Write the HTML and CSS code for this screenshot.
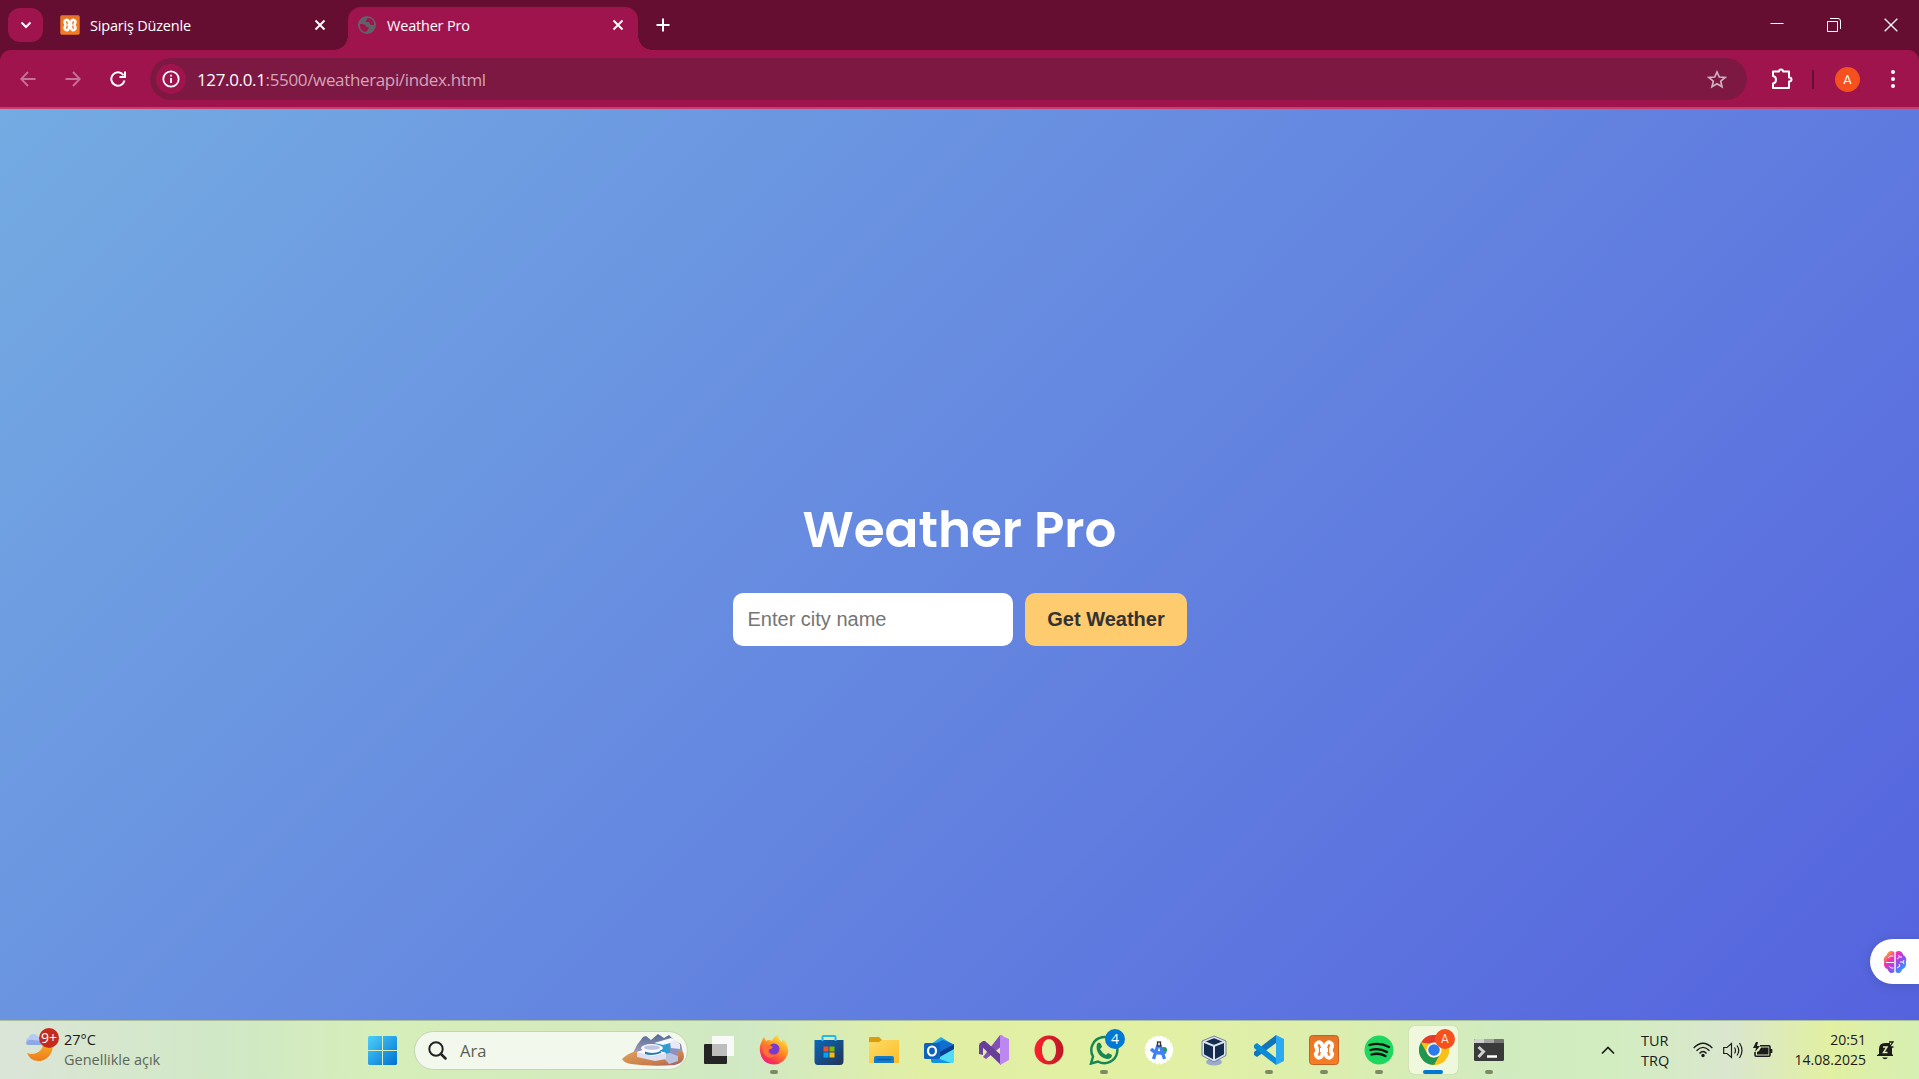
FILE: index.html
```html
<!DOCTYPE html>
<html lang="tr">
<head>
<meta charset="utf-8">
<title>Weather Pro</title>
<link rel="stylesheet" href="styles.css">
</head>
<body>
<svg class="defs" width="0" height="0" aria-hidden="true">
  <defs>
    <linearGradient id="orange" x1="0" y1="0" x2="0" y2="1"><stop offset="0" stop-color="#d9742f"/><stop offset=".2" stop-color="#ee7622"/><stop offset="1" stop-color="#f47d25"/></linearGradient>
    <symbol id="xampp" viewBox="0 0 30 30"><rect x=".5" y=".5" width="29" height="29" rx="3" fill="url(#orange)" stroke="#c66225"/><path d="M13.200 10.500A3.200 3.200 0 1 0 8 13V17A3.200 3.200 0 1 0 13.200 19.500C13.200 17.500 16.800 17.500 16.800 19.500A3.200 3.200 0 1 0 22 17V13A3.200 3.200 0 1 0 16.800 10.500C16.800 12.500 13.200 12.500 13.200 10.500Z" fill="none" stroke="#fff" stroke-width="3.800" stroke-linejoin="round"/><path d="M11 15H19" stroke="#fff" stroke-width="4"/></symbol>
    <symbol id="x" viewBox="0 0 12 12"><path d="M1.500 1.500 10.500 10.500M10.500 1.500 1.500 10.500" stroke="currentColor" fill="none"/></symbol>
  </defs>
</svg>
<div class="screen">
  <header class="tabstrip">
    <div class="tab-search"><svg width="12" height="8" viewBox="0 0 12 8"><path d="M1.500 1.500 6 6 10.500 1.500" fill="none" stroke="#fff" stroke-width="2"/></svg></div>
    <div class="tab"><svg class="favicon" width="20" height="20"><use href="#xampp"/></svg><span class="title t1">Sipariş Düzenle</span><svg class="close" width="12" height="12"><use href="#x"/></svg></div>
    <div class="tab active"><svg class="favicon" width="18" height="18" viewBox="0 0 18 18"><circle cx="9" cy="9" r="9" fill="#5f6368"/><path d="M2 8C5 8 8 8.500 8.500 11H10.500V13L8 16C4 15.500 1.500 13 2 8ZM10 2 8 4V6H10C12 6 11.500 8.500 13 9H16C16.500 5 13.500 2 10 2Z" fill="#a0144e"/></svg><span class="title t2">Weather Pro</span><svg class="close" width="12" height="12"><use href="#x"/></svg></div>
    <svg class="plus" width="14" height="14" viewBox="0 0 14 14"><path d="M7 .5V13.500M.5 7H13.500" stroke="#fff" stroke-width="2"/></svg>
    <div class="window-controls">
      <svg width="14" height="14" viewBox="0 0 14 14"><path d="M.5 5.500H13.500" stroke="#fff"/></svg>
      <svg width="14" height="14" viewBox="0 0 14 14"><path d="M.5 3.500H10.500V13.500H.5ZM3 .5H11Q13.500.5 13.500 3V11" fill="none" stroke="#fff"/></svg>
      <svg width="14" height="14" viewBox="0 0 14 14"><path d="M.7.7 13.300 13.300M13.300.7.7 13.300" stroke="#fff" stroke-width="1.300"/></svg>
    </div>
  </header>
  <nav class="toolbar">
    <svg class="nav-icon dim" width="16" height="16" viewBox="0 0 16 16"><path d="M15.500 8H1.500M8 1 1.200 8 8 15" fill="none" stroke="currentColor" stroke-width="1.800"/></svg>
    <svg class="nav-icon dim" width="16" height="16" viewBox="0 0 16 16"><path d="M.5 8H14.500M8 1 14.800 8 8 15" fill="none" stroke="currentColor" stroke-width="1.800"/></svg>
    <svg class="nav-icon" width="16" height="16" viewBox="0 0 16 16"><path d="M14.500 9.500A6.700 6.700 0 1 1 13.500 4.200M15 .5V6H9.500" fill="none" stroke="currentColor" stroke-width="2"/></svg>
    <div class="omnibox">
      <span class="info"><svg width="18" height="18" viewBox="0 0 18 18"><circle cx="9" cy="9" r="7.700" fill="none" stroke="#fff" stroke-width="1.800"/><path d="M9 8V13M9 4.800V6.600" stroke="#fff" stroke-width="1.800"/></svg></span>
      <span class="url"><b>127.0.0.1</b>:5500/weatherapi/index.html</span>
      <svg class="star" width="20" height="19" viewBox="0 0 20 19"><path d="M10 2 12.300 7 18 7.500 13.700 11.200 15 16.800 10 13.800 5 16.800 6.300 11.200 2 7.500 7.700 7Z" fill="none" stroke="#cfb2c0" stroke-width="1.700"/></svg>
    </div>
    <svg class="puzzle" width="22" height="22" viewBox="0 0 22 22"><path d="M2 3.500H8Q8 1.500 10 1.500T12 3.500H18V9.500Q20.500 9.500 20.500 11.500T18 13.500V20H2V15.500Q5 15 5 11.750T2 8Z" fill="none" stroke="#fff" stroke-width="2" stroke-linejoin="round"/></svg>
    <i class="divider"></i>
    <span class="avatar">A</span>
    <svg class="dots" width="4" height="18" viewBox="0 0 4 18" fill="#fff"><circle cx="2" cy="2" r="2"/><circle cx="2" cy="9" r="2"/><circle cx="2" cy="16" r="2"/></svg>
  </nav>
  <main class="page">
    <h1>Weather Pro</h1>
    <div class="search-box"><input type="text" placeholder="Enter city name"><button>Get Weather</button></div>
    <div class="assistant"><svg width="24" height="24" viewBox="0 0 24 24"><defs><linearGradient id="brain" x1="0" y1="0" x2="1" y2="1"><stop offset=".1" stop-color="#ffab22"/><stop offset=".35" stop-color="#f32abd"/><stop offset=".6" stop-color="#8754ed"/><stop offset=".9" stop-color="#1aa9ff"/></linearGradient></defs><path d="M11.300 2C8-.5 4 2 3.800 5 .5 7 0 10 1.300 12 0 15 2 18.500 4.500 19 6 23.500 9.500 24 11.300 22ZM12.700 2C16-.5 20 2 20.200 5 23.500 7 24 10 22.700 12 24 15 22 18.500 19.500 19 18 23.500 14.500 24 12.700 22Z" fill="url(#brain)"/><path d="M3 12.500H11M10.500 6H7L5 8M10.500 18H8L6 16M14 9 16.500 7 15.500 5M16.500 7H19M14 18 17 16M17 16 16 14M17 12H20L21 10M20 12 21 14" stroke="#fff" fill="none"/></svg></div>
  </main>
  <footer class="taskbar">
    <div class="weather">
      <svg width="36" height="36" viewBox="0 0 36 36"><defs><linearGradient id="moon" x1="0" y1="0" x2="0" y2="1"><stop offset="0" stop-color="#f5b12c"/><stop offset="1" stop-color="#ef7b18"/></linearGradient></defs><path d="M28 15C31 24 24 34 15 34 9 34 5 31 3 26 10 29 18 25 19 18Z" fill="url(#moon)"/><path d="M4.500 18A4 4 0 0 1 4.500 10.500Q6 6.500 10 7 14 8 16 12L17 18Z" fill="#b4c9f3"/><path d="M2 16Q4 12 9 13L17 14V18H4.500Q2 18 2 16Z" fill="#8da9e5"/><circle cx="25" cy="11" r="10" fill="#c42b1c"/><text x="25" y="16" class="badge-nine">9+</text></svg>
      <div class="weather-text"><span>27°C</span><span>Genellikle açık</span></div>
    </div>
    <div class="apps">
      <svg class="start" width="29" height="29" viewBox="0 0 29 29"><defs><linearGradient id="win" gradientUnits="userSpaceOnUse" x1="0" y1="0" x2="29" y2="29"><stop stop-color="#4dd0fb"/><stop offset="1" stop-color="#0070d2"/></linearGradient></defs><path d="M1 0H14V14H0V1ZM15 0H28L29 1V14H15ZM0 15H14V29H1L0 28ZM15 15H29V28L28 29H15Z" fill="url(#win)"/></svg>
      <div class="search"><svg width="19" height="19" viewBox="0 0 19 19"><circle cx="8" cy="8" r="6.700" fill="none" stroke="#222" stroke-width="2"/><path d="M13 13 17.500 17.500" stroke="#222" stroke-width="2.500" stroke-linecap="round"/></svg><span>Ara</span>
        <svg class="art" width="64" height="34" viewBox="0 0 64 34"><defs><linearGradient id="sand" x1="0" y1="0" x2="1" y2="1"><stop stop-color="#e2a35d"/><stop offset=".7" stop-color="#c77c4a"/><stop offset="1" stop-color="#935b70"/></linearGradient><linearGradient id="hill" x1="0" y1="0" x2="0" y2="1"><stop stop-color="#536996"/><stop offset="1" stop-color="#b9afc5"/></linearGradient></defs><path d="M12 20 16 12 22 4 25 3 30 7 37 1 43 5 48 2 54 8 60 11 62 20 58 25H11Z" fill="url(#hill)"/><path d="M1 26Q7 20 16 18L30 20 54 17 62 19Q66 29 54 32 30 34 10 31 3 30 1 26Z" fill="url(#sand)"/><path d="M31 11 48 7 50 9V21L42 23 31 17Z" fill="#1b82bd"/><path d="M41 11 49 9V21L42 23Z" fill="#2a9fd2"/><path d="M33 10 50 5 56 8 42 12Z" fill="#f8f8ff"/><path d="M49 9 57 12V28L48 31V24L40 22 49 20Z" fill="#8c91bf"/><path d="M49 9 54 7 59 11V16L50 15Z" fill="#e8eaf8"/><path d="M40 22 49 20 57 23V28L48 31Z" fill="#bcc3df"/><path d="M16 19 29 15 45 20V26L34 28 16 24Z" fill="#dde0f3"/><path d="M16 19 29 15 45 20 32 23Z" fill="#fbfaff"/><ellipse cx="31" cy="15" rx="11" ry="4" fill="#fafaff"/><ellipse cx="31" cy="14.500" rx="8" ry="2.300" fill="#bec5e0"/><path d="M24 18.500Q31 21.500 40 18V20Q31 23.500 24 21Z" fill="#257eab"/></svg>
      </div>
      <div class="app"><svg width="32" height="30" viewBox="0 0 32 30"><rect x="1" y="9" width="23" height="20" rx="1" fill="#252525"/><rect x="9" y="1" width="22" height="20" rx="1" fill="#fafafa" fill-opacity=".96"/><path d="M9 9H24V21H9Z" fill="#bdbdbd"/></svg></div>
      <div class="app running"><svg width="30" height="30" viewBox="0 0 30 30"><defs><linearGradient id="fox" x1=".8" y1="0" x2=".2" y2="1"><stop stop-color="#fff23f"/><stop offset=".45" stop-color="#ff8a20"/><stop offset=".8" stop-color="#fa3550"/><stop offset="1" stop-color="#e8179b"/></linearGradient></defs><path d="M1 17C0 10 3 6 5 2L7 6Q10 4 13 6 15 1 19 0 19 5 23 7L24 4Q30 11 29 18 26 29 15 29.500 3 29 1 17Z" fill="url(#fox)"/><circle cx="15" cy="14" r="5.500" fill="#783bd0"/><path d="M4 10Q9 8 14 12L12 14Q9 14 9 17 11 21 16 20 12 25 7 21 3 18 4 10" fill="#ff7139"/></svg></div>
      <div class="app"><svg width="30" height="30" viewBox="0 0 30 30"><defs><linearGradient id="store" x1="0" y1="0" x2="1" y2="1"><stop stop-color="#0a67bb"/><stop offset="1" stop-color="#243255"/></linearGradient></defs><path d="M8.500 7V2Q8.500 1 9.500 1H20.500Q21.500 1 21.500 2V7" fill="none" stroke="#28b7e9" stroke-width="2"/><path d="M.5 5H29.500V26Q29.500 30 26 30H4Q.5 30 .5 26Z" fill="url(#store)"/><path d="M8.500 5V6M21.500 5V6" stroke="#28b7e9" stroke-width="2"/><path d="M9.500 11.500h5v5h-5z" fill="#f25022"/><path d="M15.500 11.500h5v5h-5z" fill="#7fba00"/><path d="M9.500 17.500h5v5h-5z" fill="#00a4ef"/><path d="M15.500 17.500h5v5h-5z" fill="#ffb900"/></svg></div>
      <div class="app"><svg width="30" height="28" viewBox="0 0 30 28"><defs><linearGradient id="folder" x1="0" y1="0" x2="1" y2="1"><stop stop-color="#ffdc68"/><stop offset="1" stop-color="#fbbd27"/></linearGradient></defs><path d="M0 8V2Q0 1 1.500 1H10L13 4H29Q30 4 30 5V8Z" fill="#dc9b0b"/><path d="M0 6H10L13 4H30V26Q30 27 29 27H1Q0 27 0 26Z" fill="url(#folder)"/><path d="M5 27V22Q5 20 7 20H23Q25 20 25 22V27Z" fill="#147bc8"/><path d="M8 23.500H22" stroke="#0c569a" stroke-width="1.400"/></svg></div>
      <div class="app"><svg width="30" height="28" viewBox="0 0 30 28"><path d="M7 8 17 1 30 9V24Q30 27 27 27H10Q7 27 7 24Z" fill="#2aa9e8"/><path d="M10 8 19 4 29 8 17 17Z" fill="#0f6fd0"/><path d="M14 17 30 8V14L14 23Z" fill="#083f91"/><path d="M14 22 30 13V24Q30 27 27 27H14Z" fill="#4fdbf5"/><path d="M7 20 27 27H10Q7 27 7 24Z" fill="#1493df"/><rect y="7" width="16" height="16" rx="1.500" fill="#0d62bd"/><ellipse cx="8" cy="15" rx="4" ry="4.500" fill="none" stroke="#fff" stroke-width="2.200"/></svg></div>
      <div class="app"><svg width="30" height="30" viewBox="0 0 30 30"><path d="M0 10 4 8 15 17V23L4 10V20L0 19Z" fill="#68459b"/><path d="M0 19 4 22 21 0 24 1V10L7 24 4 22Z" fill="#8450b7"/><path d="M6 6 22 20V30L0 9 4 6Z" fill="#673f98"/><path d="M21 0 30 4V25L21 30Z" fill="#bd87f1"/></svg></div>
      <div class="app"><svg width="30" height="30" viewBox="0 0 30 30"><defs><linearGradient id="opera"><stop stop-color="#ff1f2d"/><stop offset="1" stop-color="#bb1826"/></linearGradient></defs><path fill-rule="evenodd" d="M15 .5A14.500 14.500 0 1 1 15 29.500 14.500 14.500 0 1 1 15 .5M15 4C10.500 4 8 9 8 15S10.500 26 15 26 22 21 22 15 19.500 4 15 4Z" fill="url(#opera)"/></svg></div>
      <div class="app running"><svg width="30" height="30" viewBox="0 0 30 30"><path d="M2 28.500 4 21.500A13 13 0 1 1 9 26.500Z" fill="none" stroke="#168652" stroke-width="2.500"/><path d="M8 9Q10 6 12 9L13 12 11 14Q13 18 17 20L19 18 23 20Q23 24 18 24C11 23 6 16 8 9Z" fill="#168652"/></svg><span class="count">4</span></div>
      <div class="app"><svg width="30" height="30" viewBox="0 0 30 30"><circle cx="15" cy="15" r="13.300" fill="#fff" stroke="#fff" stroke-width="2" stroke-dasharray="3 1.200"/><circle cx="20" cy="15" r="3" fill="#29965a"/><path d="M14 10 9.500 24M16 10 20.500 24M7 14Q13 20 22 17" stroke="#3d82f4" stroke-width="3.300" fill="none"/><rect x="13.500" y="7" width="3" height="4" fill="#eee" stroke="#333" stroke-width="1.300"/></svg></div>
      <div class="app"><svg width="30" height="31" viewBox="0 0 30 31"><ellipse cx="15" cy="27" rx="8" ry="3.500" fill="#9babc9"/><path d="M15 2 26 6.500V20L15 26 4 20V6.500Z" fill="#142c4e" stroke="#dce2ee" stroke-width="2"/><path d="M4 6.500 15 11 26 6.500M15 11V26" fill="none" stroke="#dce2ee" stroke-width="2"/><path d="M15 1 27 6V20.500L15 27 3 20.500V6Z" fill="none" stroke="#4a5c7d" stroke-width=".7"/></svg></div>
      <div class="app running"><svg width="30" height="30" viewBox="0 0 30 30"><path d="M22 0V8L3 22 0 20V17Z" fill="#1474b9"/><path d="M3 8 22 23V30L0 13V10Z" fill="#0a8bd6"/><path d="M22 0 30 4V26L22 30Z" fill="#2ba9f2"/></svg></div>
      <div class="app running"><svg width="30" height="30"><use href="#xampp"/></svg></div>
      <div class="app running"><svg width="30" height="30" viewBox="0 0 30 30"><circle cx="15" cy="15" r="14.500" fill="#1ed760"/><path d="M5.500 10Q16 7 25 12M6.500 15Q15 12.500 23 17M7.500 19.500Q15 17.500 21.500 21" fill="none" stroke="#111" stroke-width="2.300" stroke-linecap="round"/></svg></div>
      <div class="app running current"><svg width="30" height="30" viewBox="0 0 30 30"><circle cx="15" cy="15" r="15" fill="#fbc016"/><path d="M2 7.500A15 15 0 0 1 28 7.500L15 9Z" fill="#e33b2e"/><path d="M28 7.500H15L22 17 15 30A15 15 0 0 0 28 7.500" fill="#fbc016"/><path d="M2 7.500 8.500 19Q11 23 15 22.500L20 21 15 30A15 15 0 0 1 2 7.500" fill="#209750"/><circle cx="15" cy="15" r="7.500" fill="#fff"/><circle cx="15" cy="15" r="5.800" fill="#2d79ee"/></svg><span class="count profile">A</span></div>
      <div class="app running"><svg width="30" height="23" viewBox="0 0 30 23"><rect width="30" height="22" rx="1.500" fill="#3a3a3a"/><path d="M0 4V1.500Q0 0 1.500 0H10V4Z" fill="#d0d0d0"/><path d="M10 0H20V4H10Z" fill="#a4a4a4"/><path d="M20 0H28.500Q30 0 30 1.500V4H20Z" fill="#737373"/><path d="M4.500 8 9.500 12.500 4.500 18" fill="none" stroke="#cfcfcf" stroke-width="3"/><path d="M13 17.500H23" stroke="#fff" stroke-width="2.500"/></svg></div>
    </div>
    <div class="tray">
      <svg class="chevron" width="14" height="9" viewBox="0 0 14 9"><path d="M1 7.500 7 1.500 13 7.500" fill="none" stroke="#1b1b1b" stroke-width="1.700"/></svg>
      <div class="lang"><span>TUR</span><span>TRQ</span></div>
      <svg class="wifi" width="20" height="16" viewBox="0 0 20 16"><path d="M.7 6Q10-3.500 19.300 6M3.500 8.800Q10 2 16.500 8.800M6.500 11.500Q10 7.500 13.500 11.500" fill="none" stroke="#1b1b1b" stroke-width="1.400"/><circle cx="10" cy="13.500" r="1.700" fill="#1b1b1b"/></svg>
      <svg class="sound" width="20" height="17" viewBox="0 0 20 17"><path d="M.7 5.500H4L8.500 1.500V15.500L4 11.500H.7ZM11.500 5.500Q13.500 8.500 11.500 11.500M14 3.500Q17.500 8.500 14 13.500M16.500 1Q21.500 8.500 16.500 16" fill="none" stroke="#1b1b1b" stroke-width="1.200"/></svg>
      <svg class="battery" width="20" height="16" viewBox="0 0 20 16"><path d="M7 3.700H16Q17 3.700 17 5V13Q17 14.300 16 14.300H3Q2 14.300 2 13V10M18.500 7V11" fill="none" stroke="#1b1b1b" stroke-width="1.600"/><path d="M8 5.500H15.500V12.500H4V10L6 9Z" fill="#1b1b1b"/><path d="M3 0 0 6H3L2 10 7 4H4L5 0Z" fill="#1b1b1b"/></svg>
      <div class="clock"><span>20:51</span><span>14.08.2025</span></div>
      <svg class="bell" width="18" height="19" viewBox="0 0 18 19"><path d="M2 13V8Q2 2 8 2H13V6H15V13L16 14V15H0V14ZM5 16.500H11Q8 20 5 16.500" fill="#1b1b1b"/><path d="M6 6H10L6.500 11.500H10.500" fill="none" stroke="#dfedaf" stroke-width="1.500"/><path d="M12 1H16L12.500 6H16.500" fill="none" stroke="#1b1b1b" stroke-width="1.300"/></svg>
    </div>
  </footer>
</div>
</body>
</html>
```
FILE: styles.css
```css
* { box-sizing: border-box; }
body { margin: 0; font-family: "Open Sans", "Noto Sans", sans-serif; }
svg { display: block; flex: none; }
.defs { position: absolute; }
.screen { width: 1919px; height: 1079px; display: flex; flex-direction: column; overflow: hidden; background: #660d32; }

.tabstrip { height: 50px; display: flex; align-items: center; padding-left: 8px; color: #fff; flex: none; }
.tab-search { width: 35px; height: 34px; border-radius: 12px; background: #a0144e; display: grid; place-items: center; }
.tab { width: 289px; height: 43px; margin-top: 7px; display: flex; align-items: center; padding: 0 14.500px 7px 12px; font-size: 14.500px; position: relative; }
.tab:not(.active) { margin-left: 5px; width: 300px; padding-right: 22px; }
.tab.active { width: 290px; background: #a0144e; border-radius: 13px 13px 0 0; padding-left: 10px; }
.tab.active::before, .tab.active::after { content: ""; position: absolute; bottom: 0; width: 14px; height: 14px; }
.tab.active::before { left: -14px; background: radial-gradient(circle at 0 0, transparent 13.500px, #a0144e 14px); }
.tab.active::after { right: -14px; background: radial-gradient(circle at 100% 0, transparent 13.500px, #a0144e 14px); }
.favicon { margin-right: 10px; }
.tab.active .favicon { margin-right: 11px; }
.title { white-space: nowrap; }
.t1 { letter-spacing: -.2px; }
.t2 { letter-spacing: -.2px; }
.close { margin-left: auto; stroke-width: 1.900; }
.plus { margin-left: 18px; }
.window-controls { margin-left: auto; display: flex; gap: 43px; padding-right: 21px; }

.toolbar { height: 59px; display: flex; align-items: center; padding: 1px 24px 0 20px; background: #a0144e; border-radius: 11px 11px 0 0; border-bottom: 2px solid #c63f6c; flex: none; }
.nav-icon { color: #fff; margin-right: 29px; }
.nav-icon.dim { color: #c87297; }
.omnibox { width: 1597px; height: 42px; margin-left: -5px; border-radius: 21px; background: #7d1842; display: flex; align-items: center; padding: 0 20px 0 6px; }
.info { width: 30px; height: 30px; border-radius: 50%; background: #a0144e; display: grid; place-items: center; margin-right: 11px; }
.url { font-size: 17px; letter-spacing: -.35px; color: #d3a5b9; padding-top: 1px; }
.url b { color: #fff; font-weight: 400; }
.star { margin-left: auto; }
.puzzle { margin-left: 24px; }
.divider { width: 2px; height: 19px; background: #660d32; margin: 0 21px 0 19px; }
.avatar { width: 25px; height: 25px; border-radius: 50%; background: #f4511e; color: #fff; display: grid; place-items: center; font: 13px Roboto, sans-serif; }
.dots { margin-left: auto; }

.page { flex: 1; background: linear-gradient(135deg, #74abe2, #5563de); display: flex; flex-direction: column; align-items: center; position: relative; }
h1 { margin: 383px 0 0; height: 76px; line-height: 76px; font-family: Poppins, Inter, sans-serif; font-size: 50px; font-weight: 600; color: #fff; white-space: nowrap; }
.search-box { display: flex; gap: 12px; margin-top: 25px; }
.search-box input, .search-box button { height: 53px; border: 0; border-radius: 10px; font-family: "Liberation Sans", sans-serif; font-size: 20px; }
.search-box input { width: 280px; padding: 0 15px; background: #fff; }
.search-box input::placeholder { color: #757575; }
.search-box button { width: 162px; padding: 0 0 0 1px; background: #ffcb6f; color: #333; font-weight: 700; }
.assistant { position: absolute; right: 0; top: 830px; width: 49px; height: 45px; border-radius: 23px 0 0 23px; background: #fff; display: flex; align-items: center; padding-left: 13px; box-shadow: 0 2px 12px #0002; }

.taskbar { height: 59px; flex: none; border-top: 1px solid #aabd9c; display: flex; align-items: stretch; color: #1b1b1b; background: linear-gradient(90deg, #dae4d8 0, #d7e7ce 100px, #d0e8c6 220px, #d6eeb9 380px, #d3ebbd 600px, #d1e9c4 750px, #e1efa5 920px, #e2f0a3 1150px, #deefac 1300px, #d1ebc0 1500px, #d2edbf 1610px, #dae6ce 1730px, #e1f0a1 1830px, #d7efb3 1919px); }
.weather { width: 368px; padding: 6px 0 0 24px; display: flex; gap: 4px; }
.weather-text { display: flex; flex-direction: column; font-size: 14.500px; line-height: 20px; padding-top: 3px; white-space: nowrap; }
.weather-text span:last-child { color: #5c665a; }
.badge-nine { font: 14px "Open Sans", sans-serif; fill: #fff; text-anchor: middle; }
.apps { display: flex; align-items: center; }
.search { width: 274px; height: 39px; margin: 0 3px 0 17px; border-radius: 20px; border: 1px solid #c5d5b4; background: #f2f8eb; display: flex; align-items: center; padding-left: 13px; font-size: 16.500px; color: #596055; }
.search span { margin-left: 13px; }
.art { margin-left: auto; margin-right: 2px; }
.app { width: 55px; height: 58px; display: grid; place-items: center; position: relative; }
.app.running::after { content: ""; position: absolute; bottom: 5px; left: 24px; width: 8px; height: 4px; border-radius: 2px; background: #7c8962; }
.app.current::before { content: ""; position: absolute; left: 3px; top: 5px; width: 49px; height: 48px; border-radius: 5px; background: #eff7dc; box-shadow: 0 0 1px #9aa77b; }
.app.current svg { position: relative; }
.app.current::after { left: 17px; width: 20px; background: #0078d4; }
.count { position: absolute; left: 29px; top: 8px; width: 20px; height: 20px; border-radius: 50%; background: #0078d4; color: #fff; font-size: 14px; line-height: 20px; text-align: center; }
.profile { background: #f4511e; font: 12px/20px Roboto, sans-serif; color: #ffe0d5; }
.tray { margin-left: auto; display: flex; align-items: center; padding-right: 24px; }
.lang, .clock { display: flex; flex-direction: column; font-size: 14px; line-height: 20px; }
.lang { font-size: 14.500px; padding-top: 1px; }
.chevron { margin-right: 26px; }
.lang { width: 28px; margin-right: 24px; }
.wifi { margin-right: 10px; }
.sound { margin-right: 10px; }
.clock { width: 93px; margin: 0 11px 0 0; text-align: right; }
```
